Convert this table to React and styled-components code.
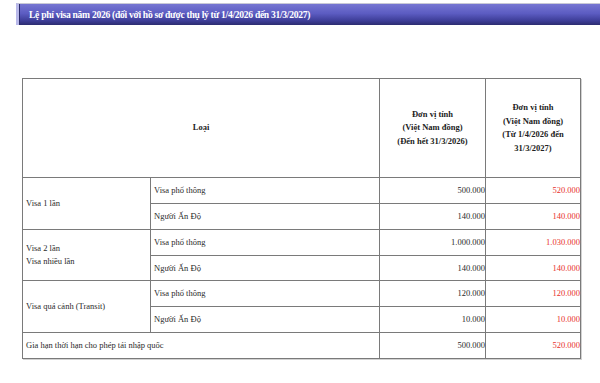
import React from "react";
import styled, { createGlobalStyle } from "styled-components";

const GlobalStyle = createGlobalStyle`
  html, body {
    margin: 0;
    padding: 0;
    background: #fff;
  }
  body {
    font-family: "Liberation Serif", "Times New Roman", serif;
    color: #222;
  }
`;

const Page = styled.div`
  width: 600px;
  height: 383px;
  overflow: hidden;
  padding-top: 3px;
  box-sizing: border-box;
`;

const TitleBar = styled.div`
  margin-left: 16px;
  height: 22px;
  box-sizing: border-box;
  border-top: 1px solid #c9c9d6;
  border-left: 3px solid #b9b9ea;
  background: linear-gradient(to bottom, #7676d2 0%, #5c5cc2 45%, #3d3d97 80%, #2c2c70 100%);
  display: flex;
  align-items: center;
  padding-left: 10px;
  box-shadow: inset 1px 0 0 #2a2a6a;
`;

const Title = styled.h2`
  margin: 0;
  font-size: 9.6px;
  letter-spacing: -0.3px;
  font-weight: bold;
  color: #fff;
  white-space: nowrap;
`;

const TableWrap = styled.div`
  margin: 53px 0 0 22px;
`;

const Table = styled.table`
  border-collapse: collapse;
  table-layout: fixed;
  width: 558px;
  font-size: 8.5px;
  border: 1px solid #7a7a7a;
  box-shadow: 1px 1px 0 #d2d2d2;
`;

const Cell = styled.td`
  border: 1px solid #7a7a7a;
  padding: 0 ${(p) => (p.$num ? "0" : "3px")};
  height: ${(p) => p.$h || 25}px;
  box-sizing: border-box;
  vertical-align: middle;
  text-align: ${(p) => (p.$num ? "right" : "left")};
  color: ${(p) => (p.$red ? "#e8312c" : "#2a2a2a")};
  line-height: 12.5px;
  white-space: nowrap;
`;

const HeadCell = styled.th`
  border: 1px solid #7a7a7a;
  height: 98px;
  padding: 0 4px;
  font-weight: bold;
  text-align: center;
  vertical-align: middle;
  line-height: 13.5px;
  color: #222;
`;

const rows = [
  { group: ["Visa 1 lần"], items: [["Visa phổ thông", "500.000", "520.000"], ["Người Ấn Độ", "140.000", "140.000"]] },
  { group: ["Visa 2 lần", "Visa nhiều lần"], items: [["Visa phổ thông", "1.000.000", "1.030.000"], ["Người Ấn Độ", "140.000", "140.000"]] },
  { group: ["Visa quá cảnh (Transit)"], items: [["Visa phổ thông", "120.000", "120.000"], ["Người Ấn Độ", "10.000", "10.000"]] },
];

export default function App() {
  return (
    <Page>
      <GlobalStyle />
      <TitleBar>
        <Title>Lệ phí visa năm 2026 (đối với hồ sơ được thụ lý từ 1/4/2026 đến 31/3/2027)</Title>
      </TitleBar>
      <TableWrap>
        <Table>
          <colgroup>
            <col style={{ width: 128 }} />
            <col style={{ width: 229 }} />
            <col style={{ width: 106 }} />
            <col style={{ width: 95 }} />
          </colgroup>
          <thead>
            <tr>
              <HeadCell colSpan={2}>Loại</HeadCell>
              <HeadCell>
                Đơn vị tính
                <br />
                (Việt Nam đồng)
                <br />
                (Đến hết 31/3/2026)
              </HeadCell>
              <HeadCell>
                Đơn vị tính
                <br />
                (Việt Nam đồng)
                <br />
                (Từ 1/4/2026 đến
                <br />
                31/3/2027)
              </HeadCell>
            </tr>
          </thead>
          <tbody>
            {rows.map((r) =>
              r.items.map((it, i) => (
                <tr key={r.group[0] + i}>
                  {i === 0 && (
                    <Cell rowSpan={2}>
                      {r.group.map((g, k) => (
                        <React.Fragment key={g}>
                          {k > 0 && <br />}
                          {g}
                        </React.Fragment>
                      ))}
                    </Cell>
                  )}
                  <Cell $h={i === 0 ? 26 : 25.5}>{it[0]}</Cell>
                  <Cell $num>{it[1]}</Cell>
                  <Cell $num $red>{it[2]}</Cell>
                </tr>
              ))
            )}
            <tr>
              <Cell colSpan={2} $h={26}>Gia hạn thời hạn cho phép tái nhập quốc</Cell>
              <Cell $num>500.000</Cell>
              <Cell $num $red>520.000</Cell>
            </tr>
          </tbody>
        </Table>
      </TableWrap>
    </Page>
  );
}
